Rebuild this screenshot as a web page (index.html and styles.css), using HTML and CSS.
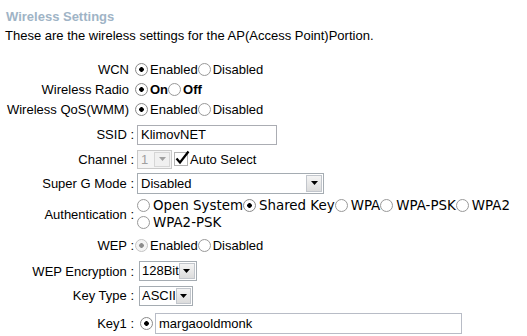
FILE: index.html
```html
<!DOCTYPE html>
<html>
<head>
<meta charset="utf-8">
<link rel="stylesheet" href="styles.css">
</head>
<body>
<div class="page">
  <div class="title">Wireless Settings</div>
  <div class="intro">These are the wireless settings for the AP(Access Point)Portion.</div>
  <div class="form">
    <div class="row r-wcn">
      <div class="label plain">WCN</div>
      <div class="value"><span class="radio on"></span>Enabled<span class="radio"></span>Disabled</div>
    </div>
    <div class="row r-radio">
      <div class="label plain">Wireless Radio</div>
      <div class="value"><span class="radio on"></span><b>On</b><span class="radio"></span><b>Off</b></div>
    </div>
    <div class="row r-qos">
      <div class="label plain">Wireless QoS(WMM)</div>
      <div class="value"><span class="radio on"></span>Enabled<span class="radio"></span>Disabled</div>
    </div>
    <div class="row r-ssid">
      <div class="label">SSID :</div>
      <div class="value"><div class="textbox ssid">KlimovNET</div></div>
    </div>
    <div class="row r-channel">
      <div class="label">Channel :</div>
      <div class="value">
        <div class="select disabled channel"><span class="sel-text">1</span><span class="arrow"><svg width="7" height="4" viewBox="0 0 7 4"><path d="M0 0H7L3.5 4Z"/></svg></span></div>
        <svg class="check" width="16" height="16" viewBox="0 0 16 16"><rect x="0.5" y="2.5" width="13" height="13" fill="#fff" stroke="#b4b4b4"/><path d="M2.5 8.5L6 12.5L14.5 1.5" fill="none" stroke="#000" stroke-width="2.2"/></svg>
        <span>Auto Select</span>
      </div>
    </div>
    <div class="row r-superg">
      <div class="label">Super G Mode :</div>
      <div class="value">
        <div class="select superg"><span class="sel-text">Disabled</span><span class="arrow"><svg width="7" height="4" viewBox="0 0 7 4"><path d="M0 0H7L3.5 4Z"/></svg></span></div>
      </div>
    </div>
    <div class="row r-auth">
      <div class="label">Authentication :</div>
      <div class="value auth">
        <span class="opt"><span class="radio"></span>Open System</span><span class="opt"><span class="radio on"></span>Shared Key</span><span class="opt"><span class="radio"></span>WPA</span><span class="opt"><span class="radio"></span>WPA-PSK</span><span class="opt"><span class="radio"></span>WPA2</span><span class="opt"><span class="radio"></span>WPA2-PSK</span>
      </div>
    </div>
    <div class="row r-wep">
      <div class="label">WEP :</div>
      <div class="value"><span class="radio on dis"></span>Enabled<span class="radio"></span>Disabled</div>
    </div>
    <div class="row r-enc">
      <div class="label">WEP Encryption :</div>
      <div class="value">
        <div class="select small enc"><span class="sel-text">128Bit</span><span class="arrow"><svg width="7" height="4" viewBox="0 0 7 4"><path d="M0 0H7L3.5 4Z"/></svg></span></div>
      </div>
    </div>
    <div class="row r-type">
      <div class="label">Key Type :</div>
      <div class="value">
        <div class="select small ktype"><span class="sel-text">ASCII</span><span class="arrow"><svg width="7" height="4" viewBox="0 0 7 4"><path d="M0 0H7L3.5 4Z"/></svg></span></div>
      </div>
    </div>
    <div class="row r-key">
      <div class="label">Key1 :</div>
      <div class="value"><span class="radio on key"></span><div class="textbox key1">margaooldmonk</div></div>
    </div>
  </div>
</div>
</body>
</html>
```

FILE: styles.css
```css
html, body {
  margin: 0;
  padding: 0;
  background: #fff;
}
body {
  font-family: "Liberation Sans", Arial, sans-serif;
  font-size: 13px;
  color: #000;
}
.page {
  padding: 9px 0 0 0;
}
.title {
  font-weight: bold;
  color: #9fb4c6;
  font-size: 13px;
  line-height: 16px;
  padding-left: 6px;
}
.intro {
  line-height: 16px;
  padding-left: 5px;
  margin-top: 3px;
}
.form {
  margin-top: 15px;
}
.row {
  display: flex;
  align-items: center;
}
.label {
  width: 134px;
  flex: none;
  text-align: right;
  box-sizing: border-box;
  white-space: nowrap;
}
.label.plain {
  padding-right: 5px;
}
.value {
  display: flex;
  align-items: center;
  padding-left: 3px;
  white-space: nowrap;
}
.r-wcn, .r-radio { height: 20px; }
.r-qos { height: 21px; }
.r-ssid { height: 28px; padding-top: 1px; box-sizing: border-box; }
.r-channel { height: 22px; }
.r-superg { height: 26px; }
.r-auth { height: 36px; }
.r-wep { height: 26px; }
.r-enc { height: 26px; }
.r-type { height: 23px; }
.r-key { height: 32px; }

.radio {
  display: inline-block;
  width: 13px;
  height: 13px;
  box-sizing: border-box;
  border: 1px solid #9a9a9a;
  border-radius: 50%;
  background: radial-gradient(circle at 50% 50%, #fff 0, #fff 60%, #f0f0f0 100%);
  margin: 0 2px 0 0;
  flex: none;
}
.value > .radio:first-child {
  margin-left: -2px;
}
.radio.on {
  background: radial-gradient(circle at 50% 50%, #000 0, #000 2px, #fff 2.6px, #fff 60%, #f0f0f0 100%);
  border-color: #8a8a8a;
}
.radio.on.dis {
  background: radial-gradient(circle at 50% 50%, #8c8c8c 0, #8c8c8c 2px, #f4f4f4 2.6px, #f4f4f4 100%);
  border-color: #c4c4c4;
}
.value > .radio.key {
  margin-left: 3px;
}

.textbox {
  box-sizing: border-box;
  border: 1px solid #abadb3;
  height: 20px;
  line-height: 18px;
  padding-left: 3px;
  background: #fff;
}
.ssid { width: 140px; }
.key1 {
  width: 307px;
  height: 21px;
  line-height: 19px;
  margin-left: 0;
  border-color: #b8bcc6;
}

.select {
  box-sizing: border-box;
  border: 1px solid #a5acb2;
  display: flex;
  align-items: stretch;
  background: #fff;
}
.sel-text {
  flex: 1;
  padding-left: 3px;
  line-height: 17px;
}
.arrow {
  width: 16px;
  margin: 1px;
  box-sizing: border-box;
  border: 1px solid #c2c6cc;
  background: linear-gradient(#f4f4f4, #dcdcdc);
  display: flex;
  align-items: center;
  justify-content: center;
}
.arrow svg path { fill: #000; }
.channel {
  width: 35px;
  height: 19px;
  border-color: #c9c9c9;
  background: #f4f4f4;
}
.channel .sel-text { color: #a0a0a0; }
.channel .arrow { border-color: #d6d6d6; background: #f0f0f0; }
.channel .arrow svg path { fill: #a0a0a0; }
.check {
  margin: 0 0 3px 2px;
  flex: none;
}
.superg {
  width: 187px;
  height: 21px;
}
.superg .sel-text { line-height: 19px; }
.small { height: 20px; }
.enc { width: 58px; margin-left: 2px; }
.ktype { width: 54px; margin-left: 2px; }
.small .sel-text { padding-left: 2px; line-height: 18px; }
.small .arrow { width: 17px; margin: 1px 1px 1px 0; }

.auth {
  flex-wrap: wrap;
  white-space: normal;
  width: 390px;
  font-family: "DejaVu Sans", Verdana, sans-serif;
  font-size: 13.4px;
  line-height: 17px;
}
.auth .radio {
  margin-right: 3px;
}
.opt {
  display: inline-flex;
  align-items: center;
  white-space: nowrap;
}
```
